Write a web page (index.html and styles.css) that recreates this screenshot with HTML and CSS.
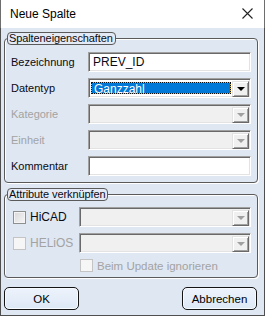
FILE: index.html
```html
<!DOCTYPE html>
<html lang="de">
<head>
  <meta charset="UTF-8" />
  <title>Neue Spalte</title>
  <link rel="stylesheet" href="styles.css">
</head>
<body>

  <div class="window">
    <div class="titlebar">
      <span class="title">Neue Spalte</span>
      <svg class="close" width="11" height="11" viewBox="0 0 11 11">
        <path d="M0.5 0.5L10.5 10.5M10.5 0.5L0.5 10.5" stroke="#222" stroke-width="1.1" fill="none"/>
      </svg>
    </div>

    <div class="content">
      <fieldset class="group props">
        <legend>Spalteneigenschaften</legend>
        <div class="form">
          <label>Bezeichnung</label>
          <div class="field sunken">PREV_ID</div>

          <label>Datentyp</label>
          <div class="combo sunken">
            <span class="selected">Ganzzahl</span>
            <span class="drop"><i class="arrow"></i></span>
          </div>

          <label class="disabled">Kategorie</label>
          <div class="combo sunken off">
            <span class="empty"></span>
            <span class="drop"><i class="arrow"></i></span>
          </div>

          <label class="disabled">Einheit</label>
          <div class="combo sunken off">
            <span class="empty"></span>
            <span class="drop"><i class="arrow"></i></span>
          </div>

          <label>Kommentar</label>
          <div class="field sunken"></div>
        </div>
      </fieldset>

      <fieldset class="group links">
        <legend>Attribute verknüpfen</legend>
        <div class="form links-form">
          <div class="check"><span class="box"></span>HiCAD</div>
          <div class="combo sunken off">
            <span class="empty"></span>
            <span class="drop"><i class="arrow"></i></span>
          </div>

          <div class="check disabled"><span class="box"></span>HELiOS</div>
          <div class="combo sunken off">
            <span class="empty"></span>
            <span class="drop"><i class="arrow"></i></span>
          </div>

          <div class="check disabled wide"><span class="box"></span>Beim Update ignorieren</div>
        </div>
      </fieldset>

      <div class="buttons">
        <button class="btn">OK</button>
        <button class="btn">Abbrechen</button>
      </div>
    </div>
  </div>

</body>
</html>
```

FILE: styles.css
```css
* {
  box-sizing: border-box;
}

body {
  margin: 0;
  font-family: "Liberation Sans", Arial, sans-serif;
  font-size: 11px;
  color: #0a0a14;
}

.window {
  width: 265px;
  height: 316px;
  display: flex;
  flex-direction: column;
  background: #dfe7f2;
}

.titlebar {
  height: 28px;
  flex-shrink: 0;
  background: #fff;
  display: flex;
  align-items: center;
  justify-content: space-between;
  padding: 0 11px 1px 9px;
  border: 1px solid #6e6e6e;
  border-bottom: none;
  border-top: none;
}

.title {
  font-family: "Liberation Sans", Arial, sans-serif;
  font-size: 12px;
  color: #000;
}

.content {
  flex: 1;
  border: 1px solid #4f4f4f;
  border-top: none;
  padding: 4px 6px 0 3px;
  display: flex;
  flex-direction: column;
}

.group {
  flex-shrink: 0;
  margin: 0;
  padding: 0;
  border: 1px solid #5a5a5a;
  border-radius: 4px;
  box-shadow: inset 1px 1px #fff, 1px 1px #fff;
  min-width: 0;
}

.group legend {
  margin-left: 2px;
  padding: 0 2px 0 1px;
  height: 13px;
  line-height: 11px;
  border: 1px solid #5a5a5a;
  border-radius: 4px;
  background: #e3eaf5;
  font-size: 11px;
  letter-spacing: -0.1px;
}

.form {
  display: grid;
  grid-template-columns: 77px 163px;
  grid-auto-rows: 20px;
  row-gap: 6px;
  align-items: center;
  padding: 7px 0 6px 6px;
}

.links .form {
  grid-template-columns: 66px 172px;
  grid-template-rows: 20px 20px 13px;
  row-gap: 6px;
  padding: 6px 0 5px 8px;
}

label {
  line-height: 20px;
}

.disabled {
  color: #a3a3a3;
}

.sunken {
  height: 20px;
  border: 1px solid;
  border-color: #a0a0a0 #fff #fff #a0a0a0;
  box-shadow: inset 1px 1px #696969, inset -1px -1px #e3e3e3;
  background: #fff;
}

.field {
  padding: 3px 0 0 4px;
  font-size: 12px;
  line-height: 13px;
}

.combo {
  display: flex;
  padding: 2px 1px 2px 2px;
}

.combo.off {
  background: #f0f0f0;
}

.selected {
  flex: 1;
  margin: 1px 1px 1px 0;
  padding: 0 0 0 2px;
  border: 1px dotted #111;
  background: linear-gradient(#0078d7, #0078d7) padding-box, #f2a93b border-box;
  color: #fff;
  font-size: 12px;
  line-height: 12px;
}

.empty {
  flex: 1;
}

.drop {
  width: 17px;
  height: 16px;
  display: flex;
  align-items: center;
  justify-content: center;
  border: 1px solid;
  border-color: #e3e3e3 #696969 #696969 #e3e3e3;
  box-shadow: inset 1px 1px #fff, inset -1px -1px #a0a0a0;
  background: #f0f0f0;
}

.arrow {
  width: 0;
  height: 0;
  border-left: 4px solid transparent;
  border-right: 4px solid transparent;
  border-top: 4px solid #000;
}

.off .arrow {
  border-top-color: #a0a0a0;
}

.check {
  display: flex;
  align-items: center;
  gap: 4px;
  font-size: 12px;
}

.check .box {
  width: 13px;
  height: 13px;
  border: 1px solid #8e8f8f;
  background: linear-gradient(135deg, #d8d8d8, #f6f6f6);
  box-shadow: inset 0 0 0 1px #f4f4f4;
}

.check.disabled .box {
  border-color: #c4c4c4;
  background: #f6f6f6;
  box-shadow: none;
}

.check.wide {
  grid-column: 2;
  height: 13px;
  margin-left: 1px;
  font-size: 11.5px;
}

.links {
  margin-top: 5px;
}

.buttons {
  display: flex;
  justify-content: space-between;
  margin-top: 9px;
  padding-right: 1px;
}

.btn {
  width: 75px;
  height: 23px;
  padding: 0;
  border: 1px solid #151515;
  border-radius: 5px;
  background: linear-gradient(#edf3fb, #dde8f6);
  box-shadow: inset 0 0 0 1px #f7faff;
  font-family: "Liberation Sans", Arial, sans-serif;
  font-size: 11.5px;
  color: #000;
}
```
